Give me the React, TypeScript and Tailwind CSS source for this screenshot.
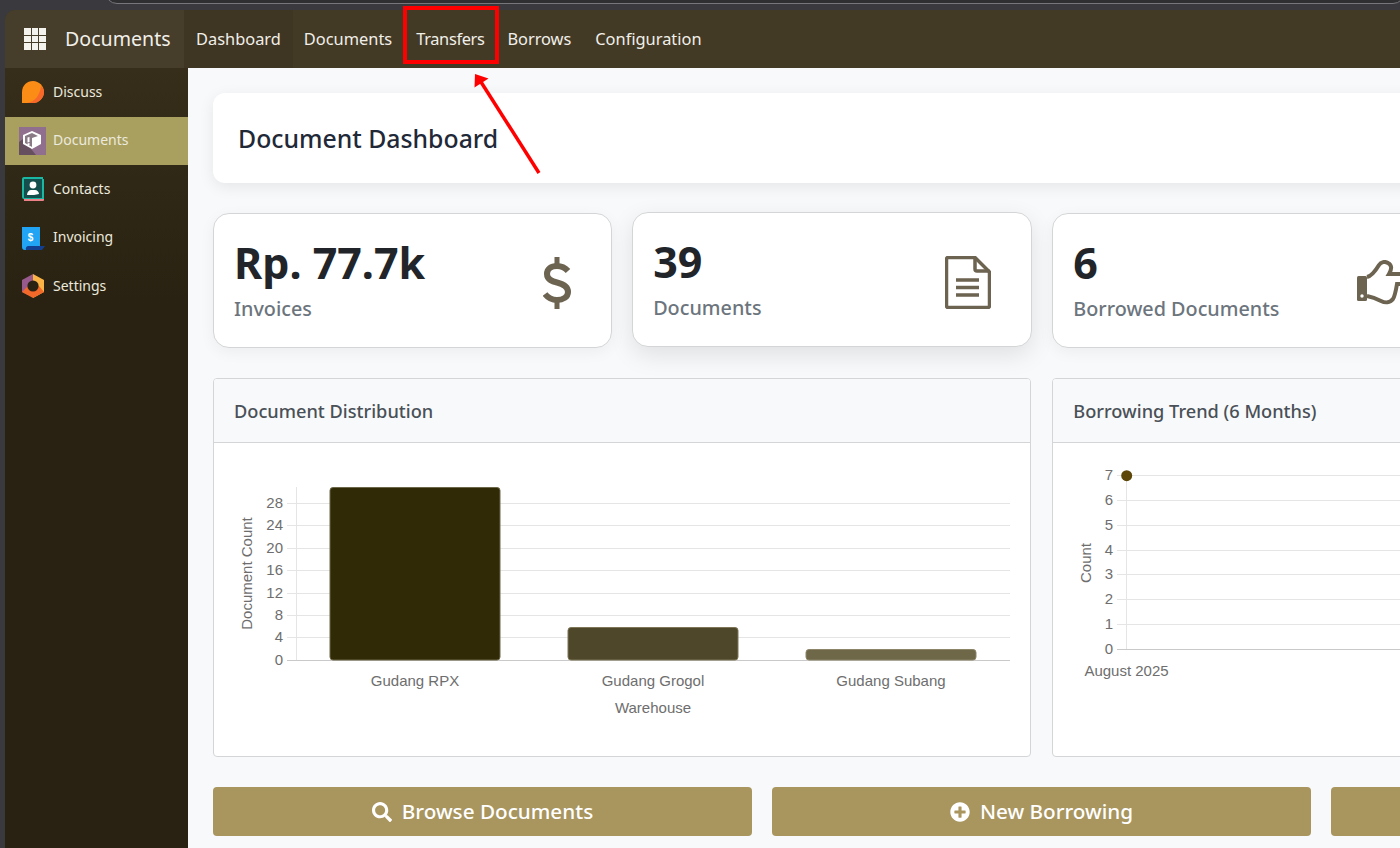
import React from "react";
import { FaPlusCircle, FaSearch } from "react-icons/fa";

const UI_FONT = "font-['Noto_Sans','Open_Sans',sans-serif]";
const ICON_COLOR = "#6c6350";

const DiscussIcon = () => (
  <svg viewBox="0 0 24 24" className="w-[24px] h-[24px]">
    <path d="M1 23V12C1 5.5 6 1 12 1s11 5 11 11-5 11-11 11z" fill="#fb8c16" />
    <path d="M23 12c0 6-5 11-11 11H6c8-1 13-8 14-17 2 2 3 4 3 6z" fill="#f8682a" />
  </svg>
);

const DocumentsIcon = () => (
  <svg viewBox="0 0 27 28" className="w-[27px] h-[28px]">
    <rect width="27" height="28" fill="#8f6f8d" />
    <path d="M0 28V15l4-3 13 16z" fill="#66505f" />
    <path d="M4 8l9-4 9 4v9l-9 5-9-5z" fill="#fff" />
    <path d="M6 9l7-3 6 3-6 2v9l-7-4z" fill="#8a7a86" />
    <path d="M8.5 10.500l2 -0.500v5l-2 0.500zM8.500 16.500l2-0.500v2l-2 0.500z" fill="#fff" />
  </svg>
);

const ContactsIcon = () => (
  <svg viewBox="0 0 24 24" className="w-[24px] h-[24px]">
    <path d="M2 3h21v20a1 1 0 0 1-1 1H3z" fill="#ee8087" />
    <path d="M1 2a2 2 0 0 1 2-2h19v2h1v20H3a2 2 0 0 1-2-2z" fill="#1ab8a3" />
    <rect x="3" y="2" width="18" height="19" fill="#144f4d" />
    <circle cx="12" cy="8" r="3.4" fill="#fff" />
    <path d="M6 18c0-3 2-5 4-5h4c2 0 4 2 4 4l-5 1z" fill="#fff" />
  </svg>
);

const InvoicingIcon = () => (
  <svg viewBox="0 0 24 24" className="w-[24px] h-[24px]">
    <path d="M3 24h18l3-4H6z" fill="#123f8f" />
    <path d="M1 1h18v19H7a3 3 0 0 0-2 4H4a3 3 0 0 1-3-3z" fill="#20a4f3" />
    <text x="9.5" y="15" textAnchor="middle" fontSize="10" fontWeight="700" fill="#fff" fontFamily="'Liberation Sans', sans-serif">$</text>
  </svg>
);

const SettingsIcon = () => (
  <svg viewBox="0 0 24 24" className="w-[24px] h-[24px]">
    <path d="M12 0l11 6v12l-11 6z" fill="#fbb345" />
    <path d="M12 0L1 6v12l6 3 5-9z" fill="#985a8c" />
    <path d="M1 18l11 6 11-6-5-6H7z" fill="#f2692a" />
    <circle cx="12" cy="12" r="5.6" fill="#2a2213" />
  </svg>
);

const DollarIcon = () => (
  <svg viewBox="0 0 28 52" className="w-[28px] h-[52px] mt-[5px]" fill="none" stroke={ICON_COLOR} strokeWidth="6">
    <path d="M25 14C22 10.500 18 9 14 9 8 9 4 12 4 17c0 6 6 7.500 10 8.500 5 1.200 11 3 11 9.500 0 5-5 8-11 8-5 0-9-2-12-6" />
    <path d="M14 0v9M14 43v9" strokeWidth="5" />
  </svg>
);

const FileIcon = () => (
  <svg viewBox="0 0 46 53" className="w-[46px] h-[53px] mt-[5px]" fill="none" stroke={ICON_COLOR} strokeWidth="3.500">
    <path d="M3 1.500H30L44.500 16V50a1.500 1.500 0 0 1-1.500 1.500H3A1.500 1.500 0 0 1 1.500 50V3A1.500 1.500 0 0 1 3 1.500z" />
    <path d="M30 1.500V13a2 2 0 0 0 2 2H44.500" />
    <path d="M11 24H34M11 31.500H34M11 39H34" />
  </svg>
);

const ThumbIcon = () => (
  <svg viewBox="0 0 53 46" className="w-[53px] h-[46px] mt-[5px]" fill="none" stroke={ICON_COLOR} strokeWidth="4">
    <path d="M10 17C15 16 19 10 22 5c2-3 6-4 9-2 4 2 4 6 1 11h14c3 0 3 10 0 10h-6c-1 6-2 12-4 15-3 4-8 4-12 2-4-2-9-4-14-5" />
    <rect x="0" y="16" width="10" height="25" rx="1.500" fill={ICON_COLOR} stroke="none" />
    <circle cx="5" cy="36" r="1.700" fill="#fff" stroke="none" />
  </svg>
);

const SIDE_ITEMS = [
  { label: "Discuss", icon: <DiscussIcon /> },
  { label: "Documents", icon: <DocumentsIcon />, active: true },
  { label: "Contacts", icon: <ContactsIcon /> },
  { label: "Invoicing", icon: <InvoicingIcon /> },
  { label: "Settings", icon: <SettingsIcon /> },
];

const NAV_ITEMS = [
  { label: "Documents", className: "-ml-px" },
  { label: "Transfers", className: "tracking-[-0.35px] -mr-[1px]" },
  { label: "Borrows", className: "tracking-[-0.05px]" },
  { label: "Configuration", className: "" },
];

const StatCard: React.FC<{ value: string; label: string; icon: React.ReactNode; lifted?: boolean }> = ({ value, label, icon, lifted }) => (
  <div className={`h-[135px] bg-white border border-[#d4d5d6] rounded-[16px] pl-[20px] pr-[40px] flex items-center justify-between ${lifted ? "-translate-y-px -mx-[0.5px] shadow-[0_8px_25px_rgba(0,0,0,0.1)]" : "shadow-[0_4px_15px_rgba(0,0,0,0.05)]"}`}>
    <div>
      <div className="text-[43px] leading-[45px] font-bold text-[#212529]">{value}</div>
      <div className="text-[19.8px] leading-[26px] font-medium text-[#6c757d] mt-[11px]">{label}</div>
    </div>
    {icon}
  </div>
);

const BarChart = () => {
  // rows read off the chart, value -> y
  const ticks = [
    { t: 0, y: 661 },
    { t: 4, y: 638 },
    { t: 8, y: 616 },
    { t: 12, y: 594 },
    { t: 16, y: 571 },
    { t: 20, y: 549 },
    { t: 24, y: 526 },
    { t: 28, y: 504 },
  ];
  const bars = [
    { x: 330, w: 170, top: 488.5, label: "Gudang RPX", fill: "#312a06", stroke: "#6d6749" },
    { x: 568, w: 170, top: 628.5, label: "Gudang Grogol", fill: "#4f472a", stroke: "#7d7657" },
    { x: 806, w: 170, top: 650.5, label: "Gudang Subang", fill: "#6e6748", stroke: "#8c8568" },
  ];
  return (
    <svg viewBox="214 444 816 312" className="w-[816px] h-[312px] block" fontFamily="'Liberation Sans', sans-serif" fontSize="15" fill="#6e6e6e">
      <line x1="296.5" y1="488" x2="296.5" y2="661" stroke="#e5e5e5" />
      {ticks.map(({ t, y }) => (
        <g key={t}>
          <line x1="287" y1={y + 0.5} x2="1010" y2={y + 0.5} stroke={t === 0 ? "#c9c9c9" : "#e5e5e5"} />
          <text x="283" y={y + 5} textAnchor="end">{t}</text>
        </g>
      ))}
      {bars.map((b) => (
        <g key={b.label}>
          <rect x={b.x} y={b.top} width={b.w} height={661 - b.top} rx="3" fill={b.fill} stroke={b.stroke} />
          <text x={b.x + b.w / 2} y="687" textAnchor="middle">{b.label}</text>
        </g>
      ))}
      <text x="0" y="0" textAnchor="middle" transform="translate(252 574.500) rotate(-90)">Document Count</text>
      <text x="653" y="714" textAnchor="middle">Warehouse</text>
    </svg>
  );
};

const LineChart = () => {
  const rows = [650, 625, 600, 575, 551, 526, 501, 476];
  return (
    <svg viewBox="1053 444 400 312" className="w-[400px] h-[312px] block" fontFamily="'Liberation Sans', sans-serif" fontSize="15" fill="#6e6e6e">
      <line x1="1126.5" y1="476" x2="1126.5" y2="651" stroke="#e5e5e5" />
      {rows.map((y, t) => (
        <g key={t}>
          <line x1="1117" y1={y + 0.5} x2="1440" y2={y + 0.5} stroke={t === 0 ? "#c9c9c9" : "#e5e5e5"} />
          <text x="1113" y={y + 5} textAnchor="end">{t}</text>
        </g>
      ))}
      <circle cx="1126.7" cy="476.7" r="5.5" fill="#5c4709" />
      <text x="0" y="0" textAnchor="middle" transform="translate(1091 564) rotate(-90)">Count</text>
      <text x="1126.5" y="676.500" textAnchor="middle">August 2025</text>
    </svg>
  );
};

const ChartCard: React.FC<{ title: string; children: React.ReactNode; className?: string }> = ({ title, children, className }) => (
  <div className={`h-[379px] bg-white border border-[#d4d5d6] rounded-[4px] overflow-hidden ${className ?? ""}`}>
    <div className="h-[64px] bg-[#f8f9fa] border-b border-[#d4d5d6] pl-[20px] pt-[2px] flex items-center text-[18.2px] font-medium text-[#495057]">{title}</div>
    {children}
  </div>
);

const ActionButton: React.FC<{ icon?: React.ReactNode; label?: string }> = ({ icon, label }) => (
  <div className="h-[49px] bg-[#a9955e] rounded-[4px] flex items-center justify-center gap-[10px] text-white text-[20.7px] font-medium">
    {icon}
    {label}
  </div>
);

export default function App() {
  return (
    <div className={`relative w-[1400px] h-[848px] overflow-hidden bg-[#3a3a3e] pt-[10px] pl-[5px] ${UI_FONT}`}>
      {/* browser tab edge */}
      <div className="absolute left-[105px] top-[-20px] w-[1300px] h-[24px] border border-[#77777b] bg-[#2f2f32] rounded-[12px]" />
      <div className="relative h-full rounded-tl-[10px] overflow-hidden flex flex-col">
        <header className="h-[58px] shrink-0 bg-[#433a26] flex items-center text-[#f1efe9] text-[16.4px]">
          <div className="w-[179px] h-full bg-[#463d2a] flex items-center">
            <div className="ml-[19px] w-[22px] h-[22px] grid grid-cols-3 gap-[1px]">
              {Array.from({ length: 9 }).map((_, i) => (
                <span key={i} className="bg-[#f5f3ee]" />
              ))}
            </div>
            <span className="ml-[19px] text-[19.6px]">Documents</span>
          </div>
          <div className="h-full bg-[#3e3522] px-[12px] flex items-center">Dashboard</div>
          {NAV_ITEMS.map((item) => (
            <div key={item.label} className={`h-full px-[12px] flex items-center ${item.className}`}>{item.label}</div>
          ))}
        </header>
        <div className="flex flex-1 min-h-0">
          <aside className="w-[183px] shrink-0 bg-gradient-to-b from-[#362e1a] to-[#292212] to-[30%] text-[14px] text-[#ece9dd]">
            {SIDE_ITEMS.map((item) => (
              <div key={item.label} className={`h-[48.5px] flex items-center pl-[14px] ${item.active ? "bg-[#a9a060]" : ""}`}>
                <span className="w-[27px] flex justify-center">{item.icon}</span>
                <span className="ml-[7px] -mt-[2px]">{item.label}</span>
              </div>
            ))}
          </aside>
          <main className="w-[1400px] shrink-0 bg-[#f8f9fb] pt-[25px] pl-[25px]">
            <div className="w-[1238px] h-[90px] bg-white rounded-[12px] shadow-[0_4px_15px_rgba(0,0,0,0.08)] pl-[25px] pt-[2px] flex items-center text-[24.8px] font-medium text-[#1f2937]">
              Document Dashboard
            </div>
            <div className="w-[1238px] grid grid-cols-3 gap-[21px] mt-[30px]">
              <StatCard value="Rp. 77.7k" label="Invoices" icon={<DollarIcon />} />
              <StatCard value="39" label="Documents" lifted icon={<FileIcon />} />
              <StatCard value="6" label="Borrowed Documents" icon={<ThumbIcon />} />
            </div>
            <div className="w-[1238px] grid grid-cols-3 gap-[21px] mt-[30px]">
              <ChartCard title="Document Distribution" className="col-span-2">
                <BarChart />
              </ChartCard>
              <ChartCard title="Borrowing Trend (6 Months)">
                <LineChart />
              </ChartCard>
            </div>
            <div className="w-[1657px] grid grid-cols-3 gap-[20px] mt-[30px]">
              <ActionButton icon={<FaSearch className="text-[20px]" />} label="Browse Documents" />
              <ActionButton icon={<FaPlusCircle className="text-[20px]" />} label="New Borrowing" />
              <ActionButton />
            </div>
          </main>
        </div>
      </div>
      {/* annotation over the screenshot */}
      <div className="absolute left-[403px] top-[6px] w-[96px] h-[58px] border-[4px] border-[#ff0000]" />
      <svg className="absolute left-[460px] top-[60px] w-[100px] h-[130px]" viewBox="460 60 100 130">
        <line x1="539" y1="173" x2="481" y2="82" stroke="#ff0000" strokeWidth="3.5" />
        <path d="M475 74L488.500 78.500 474.500 87.500z" fill="#ff0000" />
      </svg>
    </div>
  );
}
